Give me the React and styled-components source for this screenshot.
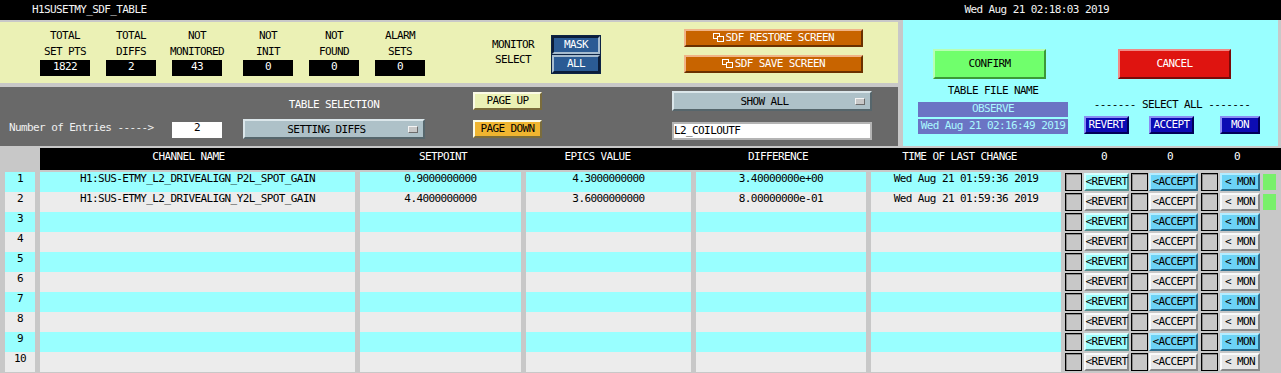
import React from "react";
import styled, { createGlobalStyle, css } from "styled-components";

const GlobalStyle = createGlobalStyle`
  html, body {
    margin: 0;
    padding: 0;
    background: #c8c8c8;
  }
  body {
    font-family: "DejaVu Sans Mono", "Liberation Mono", monospace;
    font-size: 11px;
    letter-spacing: -0.6px;
  }
  * {
    box-sizing: border-box;
  }
`;

const CYAN = "#99ffff";
const ROW_GRAY = "#ececec";

const bevel = (light, dark) => css`
  border: 2px solid;
  border-color: ${light} ${dark} ${dark} ${light};
`;

const Screen = styled.div`
  width: 1281px;
  height: 373px;
  overflow: hidden;
  background: #c8c8c8;
`;

const TitleBar = styled.div`
  height: 20px;
  background: #000;
  color: #f4f4f4;
  display: flex;
  justify-content: space-between;
  padding: 0 172px 0 32px;
  line-height: 19px;
`;

const TopSection = styled.div`
  display: flex;
  height: 126px;
`;

const LeftStack = styled.div`
  width: 898px;
  display: flex;
  flex-direction: column;
  padding-top: 2px;
  gap: 4px;
`;

const StatPanel = styled.div`
  height: 61px;
  background: #ebf1b5;
  display: flex;
  align-items: flex-start;
`;

const StatRow = styled.div`
  display: flex;
  margin: 6px 0 0 40px;
  gap: 16px;
`;

const StatGroup = styled.div`
  width: 50px;
  margin-left: ${(p) => p.$shift || 0}px;
  display: flex;
  flex-direction: column;
  align-items: center;
`;

const StatLabel = styled.div`
  line-height: 16px;
  color: #000;
  white-space: nowrap;
`;

const StatValue = styled.div`
  width: 50px;
  height: 16px;
  background: #000;
  color: #fff;
  text-align: center;
  line-height: 14px;
`;

const MonitorLabel = styled.div`
  margin: 15px 0 0 58px;
  width: 60px;
  line-height: 15px;
  text-align: center;
  color: #000;
`;

const ToggleGroup = styled.div`
  margin: 13px 0 0 8px;
  width: 50px;
  display: flex;
  flex-direction: column;
  gap: 1px;
  padding: 1px;
  background: #0d2445;
`;

const ToggleBtn = styled.div`
  height: 18px;
  background: #2b5b94;
  color: #fff;
  text-align: center;
  line-height: 14px;
  ${(p) => (p.$pressed ? bevel("#0b1d3a", "#a6bccf") : bevel("#a6bccf", "#0b1d3a"))}
`;

const SdfColumn = styled.div`
  margin: 7px 0 0 83px;
  width: 179px;
  display: flex;
  flex-direction: column;
  gap: 8px;
`;

const SdfButton = styled.div`
  height: 18px;
  background: #c86400;
  color: #fff;
  display: flex;
  align-items: center;
  justify-content: center;
  line-height: 14px;
  ${bevel("#f0b488", "#6a3000")}
  svg {
    margin-right: 0.6px;
  }
`;

const ControlPanel = styled.div`
  height: 59px;
  background: #696969;
  display: flex;
  align-items: flex-start;
`;

const EntriesLabel = styled.div`
  margin: 33px 0 0 9px;
  width: 163px;
  line-height: 16px;
  color: #f0f0f0;
  white-space: pre;
`;

const EntriesBox = styled.div`
  margin-top: 35px;
  width: 50px;
  height: 16px;
  background: #fff;
  color: #000;
  text-align: center;
  line-height: 12px;
`;

const ControlColumn = styled.div`
  margin: ${(p) => p.$top}px 0 0 ${(p) => p.$left}px;
  width: ${(p) => p.$w}px;
  display: flex;
  flex-direction: column;
  gap: ${(p) => p.$gap || 0}px;
`;

const PanelLabel = styled.div`
  line-height: 16px;
  color: #fff;
  text-align: center;
  margin-bottom: 6px;
`;

const Dropdown = styled.div`
  height: 20px;
  display: flex;
  align-items: center;
  background: #aec1c8;
  ${bevel("#dbe6ea", "#56666c")}
`;

const DropText = styled.div`
  flex: 1;
  text-align: center;
  color: #000;
  line-height: 16px;
  padding-top: 1px;
`;

const DropIndicator = styled.div`
  width: 10px;
  height: 7px;
  margin-right: 5px;
  background: #c8c8c8;
  border: 1px solid;
  border-color: #f4f4f4 #6c6c6c #6c6c6c #f4f4f4;
`;

const PageButton = styled.div`
  height: 18px;
  background: ${(p) => p.$bg};
  color: #000;
  text-align: center;
  line-height: 14px;
  ${bevel("#fbfbe6", "#7a6c3c")}
`;

const TextInput = styled.div`
  height: 18px;
  background: #fff;
  color: #000;
  line-height: 14px;
  border: 2px solid #b4b4b4;
`;

const CyanPanel = styled.div`
  margin-left: 5px;
  width: 375px;
  height: 126px;
  background: ${CYAN};
  display: flex;
  align-items: flex-start;
`;

const CyanColumn = styled.div`
  margin: 29px 0 0 ${(p) => p.$left}px;
  width: ${(p) => p.$w}px;
  display: flex;
  flex-direction: column;
`;

const BigButton = styled.div`
  margin-left: ${(p) => p.$ml}px;
  width: 113px;
  height: 30px;
  text-align: center;
  line-height: 26px;
  ${(p) =>
    p.$variant === "confirm"
      ? css`
          background: #70ff6c;
          color: #000;
          ${bevel("#b8ffb4", "#3c9a38")}
        `
      : css`
          background: #df1410;
          color: #fff;
          ${bevel("#f08a86", "#7a0a08")}
        `}
`;

const DarkLabel = styled.div`
  margin-top: ${(p) => p.$mt}px;
  line-height: 16px;
  text-align: center;
  color: #000;
  white-space: pre;
`;

const InfoBox = styled.div`
  margin-top: ${(p) => p.$mt}px;
  height: 15px;
  background: #6b74c4;
  color: #aaf8ff;
  text-align: center;
  line-height: 13px;
`;

const SelectRow = styled.div`
  margin-top: 3px;
  display: flex;
`;

const NavyButton = styled.div`
  margin-left: ${(p) => p.$ml}px;
  width: ${(p) => p.$w}px;
  height: 18px;
  background: #0c0cb4;
  color: #fff;
  text-align: center;
  line-height: 14px;
  ${bevel("#8a8cf4", "#000058")}
`;

const TableArea = styled.div`
  padding-top: 2px;
  display: flex;
  flex-direction: column;
`;

const HeaderRow = styled.div`
  margin: 0 0 2px 40px;
  height: 22px;
  background: #000;
  color: #fff;
  display: flex;
`;

const HeaderCell = styled.div`
  width: ${(p) => p.$w}px;
  margin-left: ${(p) => p.$ml || 0}px;
  display: flex;
  justify-content: center;
  white-space: nowrap;
  line-height: 16px;
  padding-top: 1px;
`;

const DataRow = styled.div`
  display: flex;
  height: 20px;
`;

const Cell = styled.div`
  width: ${(p) => p.$w}px;
  margin-left: ${(p) => p.$ml}px;
  background: ${(p) => (p.$odd ? CYAN : ROW_GRAY)};
  color: #000;
  display: flex;
  justify-content: center;
  white-space: nowrap;
  line-height: 14px;
`;

const ButtonGroup = styled.div`
  margin-left: 4px;
  padding-top: 1px;
  display: flex;
  align-items: flex-start;
`;

const CheckBox = styled.div`
  width: 17px;
  height: 18px;
  margin-left: ${(p) => p.$ml || 0}px;
  background: #c8c8c8;
  border: 1px solid #000;
  box-shadow: inset 1px 1px 0 #8a8a8a;
`;

const rowButtonColors = {
  revert: ["#9dfdfd", "#d8ffff", "#4e9090"],
  accept: ["#6cd3f6", "#b4ecff", "#2c6e8e"],
  plain: ["#e6e6e6", "#fafafa", "#8a8a8a"],
};

const RowButton = styled.div`
  width: ${(p) => p.$w}px;
  height: 18px;
  margin-left: ${(p) => p.$ml}px;
  background: ${(p) => rowButtonColors[p.$kind][0]};
  ${(p) => bevel(rowButtonColors[p.$kind][1], rowButtonColors[p.$kind][2])}
  color: #000;
  display: flex;
  justify-content: center;
  white-space: nowrap;
  line-height: 14px;
`;

const StatusLed = styled.div`
  width: 13px;
  height: 16px;
  margin: 1px 0 0 3px;
  background: ${(p) => (p.$on ? "#78f06a" : "transparent")};
`;

const WindowIcon = () => (
  <svg width="12" height="10" viewBox="0 0 12 10">
    <rect x="0.5" y="0.5" width="6" height="5" fill="none" stroke="#fff" />
    <rect x="4.5" y="3.5" width="6" height="5" fill="#c86400" stroke="#fff" />
  </svg>
);

const stats = [
  { l1: "TOTAL", l2: "SET PTS", v: "1822" },
  { l1: "TOTAL", l2: "DIFFS", v: "2" },
  { l1: "NOT", l2: "MONITORED", v: "43" },
  { l1: "NOT", l2: "INIT", v: "0", shift: 5 },
  { l1: "NOT", l2: "FOUND", v: "0" },
  { l1: "ALARM", l2: "SETS", v: "0" },
];

const headers = [
  { t: "CHANNEL NAME", w: 297 },
  { t: "SETPOINT", w: 212 },
  { t: "EPICS VALUE", w: 97 },
  { t: "DIFFERENCE", w: 264 },
  { t: "TIME OF LAST CHANGE", w: 99 },
  { t: "0", w: 20, ml: 85 },
  { t: "0", w: 20, ml: 46 },
  { t: "0", w: 20, ml: 47 },
];

const columns = [
  { key: "idx", w: 30, ml: 5 },
  { key: "name", w: 315, ml: 5 },
  { key: "setpoint", w: 161, ml: 5 },
  { key: "epics", w: 165, ml: 5 },
  { key: "diff", w: 170, ml: 5 },
  { key: "time", w: 190, ml: 5 },
];

const entries = [
  {
    name: "H1:SUS-ETMY_L2_DRIVEALIGN_P2L_SPOT_GAIN",
    setpoint: "0.9000000000",
    epics: "4.3000000000",
    diff: "3.40000000e+00",
    time: "Wed Aug 21 01:59:36 2019",
  },
  {
    name: "H1:SUS-ETMY_L2_DRIVEALIGN_Y2L_SPOT_GAIN",
    setpoint: "4.4000000000",
    epics: "3.6000000000",
    diff: "8.00000000e-01",
    time: "Wed Aug 21 01:59:36 2019",
  },
];

const rows = Array.from({ length: 10 }, (_, i) => ({
  idx: String(i + 1),
  ...(entries[i] || {}),
}));

function TableRow({ row, odd, live }) {
  return (
    <DataRow>
      {columns.map((c) => (
        <Cell key={c.key} $w={c.w} $ml={c.ml} $odd={odd}>
          {row[c.key] || ""}
        </Cell>
      ))}
      <ButtonGroup>
        <CheckBox />
        <RowButton $w={45} $ml={2} $kind={odd ? "revert" : "plain"}>
          &lt;REVERT
        </RowButton>
        <CheckBox $ml={2} />
        <RowButton $w={49} $ml={1} $kind={odd ? "accept" : "plain"}>
          &lt;ACCEPT
        </RowButton>
        <CheckBox $ml={3} />
        <RowButton $w={40} $ml={2} $kind={odd ? "accept" : "plain"}>
          {"< MON"}
        </RowButton>
        <StatusLed $on={live} />
      </ButtonGroup>
    </DataRow>
  );
}

export default function App() {
  return (
    <Screen>
      <GlobalStyle />
      <TitleBar>
        <span>H1SUSETMY_SDF_TABLE</span>
        <span>Wed Aug 21 02:18:03 2019</span>
      </TitleBar>

      <TopSection>
        <LeftStack>
          <StatPanel>
            <StatRow>
              {stats.map((s, i) => (
                <StatGroup key={i} $shift={s.shift}>
                  <StatLabel>{s.l1}</StatLabel>
                  <StatLabel>{s.l2}</StatLabel>
                  <StatValue>{s.v}</StatValue>
                </StatGroup>
              ))}
            </StatRow>
            <MonitorLabel>
              MONITOR
              <br />
              SELECT
            </MonitorLabel>
            <ToggleGroup>
              <ToggleBtn $pressed>MASK</ToggleBtn>
              <ToggleBtn>ALL</ToggleBtn>
            </ToggleGroup>
            <SdfColumn>
              <SdfButton>
                <WindowIcon />
                SDF RESTORE SCREEN
              </SdfButton>
              <SdfButton>
                <WindowIcon />
                SDF SAVE SCREEN
              </SdfButton>
            </SdfColumn>
          </StatPanel>

          <ControlPanel>
            <EntriesLabel>Number of Entries -----&gt;</EntriesLabel>
            <EntriesBox>2</EntriesBox>
            <ControlColumn $top={10} $left={21} $w={182}>
              <PanelLabel>TABLE SELECTION</PanelLabel>
              <Dropdown>
                <DropText>SETTING DIFFS</DropText>
                <DropIndicator />
              </Dropdown>
            </ControlColumn>
            <ControlColumn $top={5} $left={48} $w={69} $gap={10}>
              <PageButton $bg="#ebf1b5">PAGE UP</PageButton>
              <PageButton $bg="#f0b530">PAGE DOWN</PageButton>
            </ControlColumn>
            <ControlColumn $top={4} $left={130} $w={200} $gap={11}>
              <Dropdown>
                <DropText>SHOW ALL</DropText>
                <DropIndicator />
              </Dropdown>
              <TextInput>L2_COILOUTF</TextInput>
            </ControlColumn>
          </ControlPanel>
        </LeftStack>

        <CyanPanel>
          <CyanColumn $left={15} $w={150}>
            <BigButton $variant="confirm" $ml={15}>
              CONFIRM
            </BigButton>
            <DarkLabel $mt={4}>TABLE FILE NAME</DarkLabel>
            <InfoBox $mt={3}>OBSERVE</InfoBox>
            <InfoBox $mt={2}>Wed Aug 21 02:16:49 2019</InfoBox>
          </CyanColumn>
          <CyanColumn $left={16} $w={176}>
            <BigButton $variant="cancel" $ml={34}>
              CANCEL
            </BigButton>
            <DarkLabel $mt={18}>------- SELECT ALL -------</DarkLabel>
            <SelectRow>
              <NavyButton $w={45} $ml={0}>
                REVERT
              </NavyButton>
              <NavyButton $w={45} $ml={20}>
                ACCEPT
              </NavyButton>
              <NavyButton $w={40} $ml={26}>
                MON
              </NavyButton>
            </SelectRow>
          </CyanColumn>
        </CyanPanel>
      </TopSection>

      <TableArea>
        <HeaderRow>
          {headers.map((h, i) => (
            <HeaderCell key={i} $w={h.w} $ml={h.ml}>
              {h.t}
            </HeaderCell>
          ))}
        </HeaderRow>
        {rows.map((r, i) => (
          <TableRow key={i} row={r} odd={i % 2 === 0} live={i < 2} />
        ))}
      </TableArea>
    </Screen>
  );
}
